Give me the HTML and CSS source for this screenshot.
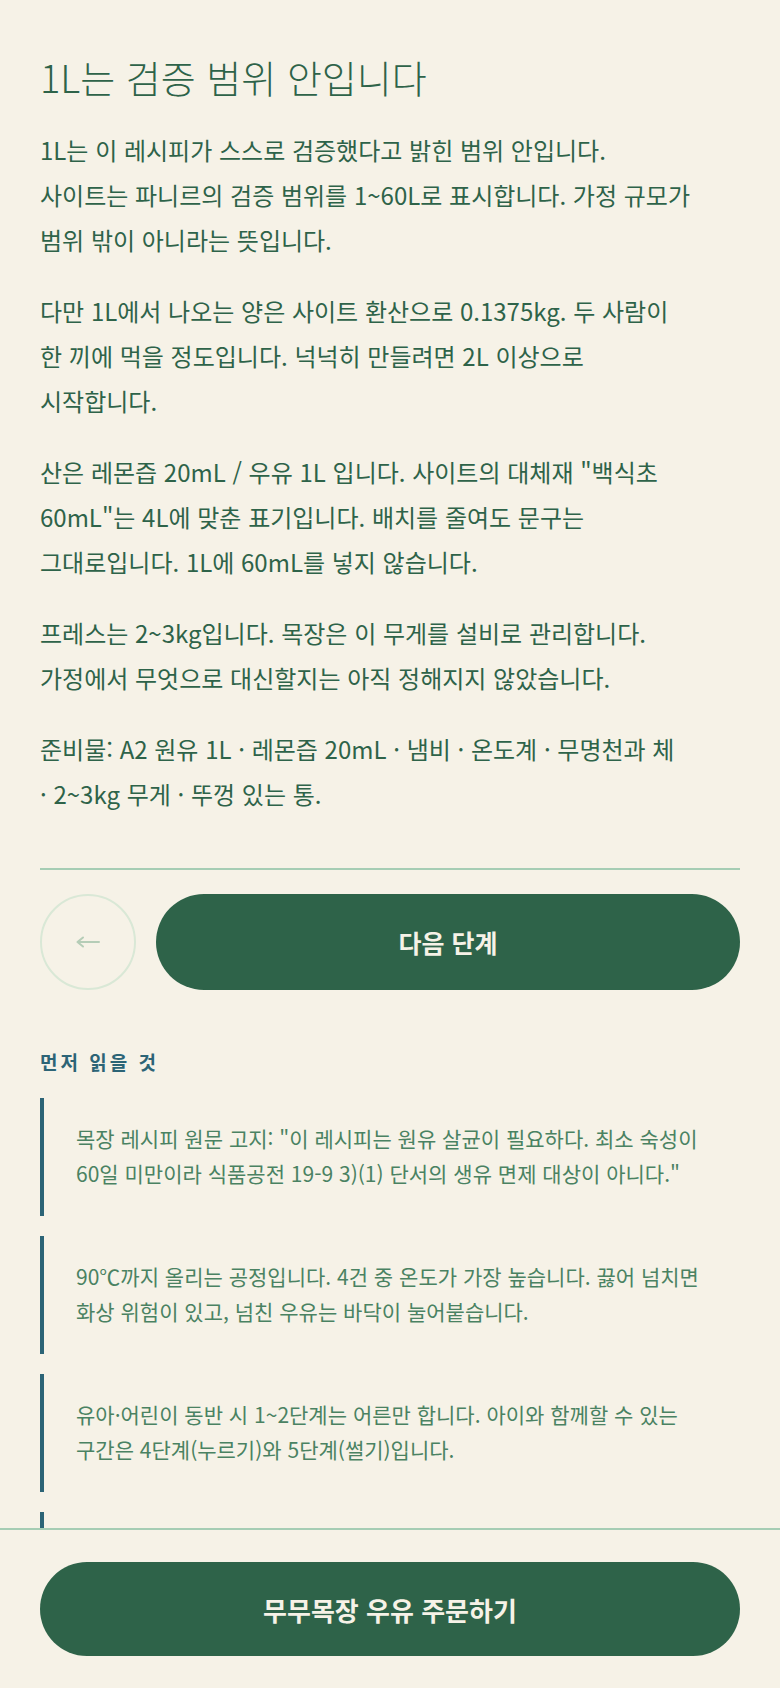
FILE: index.html
```html
<!DOCTYPE html>
<html lang="ko">
<head>
<meta charset="utf-8">
<meta name="viewport" content="width=device-width, initial-scale=1">
<title>1L는 검증 범위 안입니다</title>
<link rel="stylesheet" href="styles.css">
</head>
<body>
<main class="page">
  <h1 class="title">1L는 검증 범위 안입니다</h1>
  <p class="para">1L는 이 레시피가 스스로 검증했다고 밝힌 범위 안입니다.<br>사이트는 파니르의 검증 범위를 1~60L로 표시합니다. 가정 규모가<br>범위 밖이 아니라는 뜻입니다.</p>
  <p class="para">다만 1L에서 나오는 양은 사이트 환산으로 0.1375kg. 두 사람이<br>한 끼에 먹을 정도입니다. 넉넉히 만들려면 2L 이상으로<br>시작합니다.</p>
  <p class="para">산은 레몬즙 20mL / 우유 1L 입니다. 사이트의 대체재 "백식초<br>60mL"는 4L에 맞춘 표기입니다. 배치를 줄여도 문구는<br>그대로입니다. 1L에 60mL를 넣지 않습니다.</p>
  <p class="para">프레스는 2~3kg입니다. 목장은 이 무게를 설비로 관리합니다.<br>가정에서 무엇으로 대신할지는 아직 정해지지 않았습니다.</p>
  <p class="para">준비물: A2 원유 1L · 레몬즙 20mL · 냄비 · 온도계 · 무명천과 체<br>· 2~3kg 무게 · 뚜껑 있는 통.</p>

  <hr class="divider">

  <div class="nav-row">
    <button class="back-btn" type="button" aria-label="이전 단계">
      <svg class="back-icon" width="24" height="12" viewBox="0 0 24 12" aria-hidden="true">
        <path d="M23 6H1.5M7 1.5L1.5 6L7 10.5" fill="none" stroke="currentColor" stroke-width="2" stroke-linecap="round" stroke-linejoin="round"/>
      </svg>
    </button>
    <button class="next-btn" type="button">다음 단계</button>
  </div>

  <section class="notes">
    <h2 class="notes-label">먼저 읽을 것</h2>
    <ul class="note-list">
      <li class="note">목장 레시피 원문 고지: "이 레시피는 원유 살균이 필요하다. 최소 숙성이<br>60일 미만이라 식품공전 19-9 3)(1) 단서의 생유 면제 대상이 아니다."</li>
      <li class="note">90℃까지 올리는 공정입니다. 4건 중 온도가 가장 높습니다. 끓어 넘치면<br>화상 위험이 있고, 넘친 우유는 바닥이 눌어붙습니다.</li>
      <li class="note">유아·어린이 동반 시 1~2단계는 어른만 합니다. 아이와 함께할 수 있는<br>구간은 4단계(누르기)와 5단계(썰기)입니다.</li>
      <li class="note">압착 중에는 무게가 기울지 않도록 평평한 곳에 둡니다. 뚜껑 있는<br>통에 담아 냉장 보관합니다.</li>
    </ul>
  </section>
</main>

<div class="order-bar">
  <button class="order-btn" type="button">무무목장 우유 주문하기</button>
</div>
</body>
</html>
```

FILE: styles.css
```css
* {
  box-sizing: border-box;
}

html,
body {
  margin: 0;
  padding: 0;
  background: #f6f2e7;
}

body {
  font-family: "Noto Sans CJK KR", "Noto Sans", sans-serif;
  color: #2e6349;
  word-break: keep-all;
}

.page {
  padding: 53px 40px 200px;
}

.title {
  margin: 0 0 26px;
  font-size: 38px;
  line-height: 48px;
  font-weight: 300;
  color: #2e6349;
  letter-spacing: 0;
}

.para {
  margin: 0 0 26px;
  font-size: 24px;
  line-height: 45px;
  font-weight: 400;
  color: #2e6349;
}

.divider {
  margin: 52px 0 0;
  border: none;
  height: 2px;
  background: #a6cdb4;
}

.nav-row {
  display: flex;
  align-items: center;
  gap: 20px;
  margin-top: 24px;
}

.back-btn {
  flex: 0 0 96px;
  width: 96px;
  height: 96px;
  border-radius: 50%;
  border: 2px solid #d9e8d6;
  background: transparent;
  color: #b5cdb7;
  display: flex;
  align-items: center;
  justify-content: center;
  padding: 0;
}

.back-icon {
  display: block;
}

.next-btn {
  flex: 1 1 auto;
  height: 96px;
  border: none;
  border-radius: 48px;
  background: #2e6349;
  color: #f6f2e7;
  font-family: "Noto Sans CJK KR", "Noto Sans", sans-serif;
  font-size: 25px;
  font-weight: 700;
}

.notes {
  margin-top: 58px;
}

.notes-label {
  margin: 0 0 22px;
  font-size: 19px;
  line-height: 28px;
  font-weight: 700;
  letter-spacing: 3px;
  color: #2c6476;
}

.note-list {
  list-style: none;
  margin: 0;
  padding: 0;
  display: flex;
  flex-direction: column;
  gap: 20px;
}

.note {
  border-left: 4px solid #2c6476;
  padding: 23px 24px 25px 32px;
  font-size: 21px;
  line-height: 35px;
  color: #4a8262;
}

.order-bar {
  position: fixed;
  left: 0;
  right: 0;
  bottom: 0;
  background: #f6f2e7;
  border-top: 2px solid #a6cdb4;
  padding: 32px 40px 32px;
}

.order-btn {
  display: block;
  width: 100%;
  height: 94px;
  border: none;
  border-radius: 47px;
  background: #2e6349;
  color: #f6f2e7;
  font-family: "Noto Sans CJK KR", "Noto Sans", sans-serif;
  font-size: 26px;
  font-weight: 700;
}
```
